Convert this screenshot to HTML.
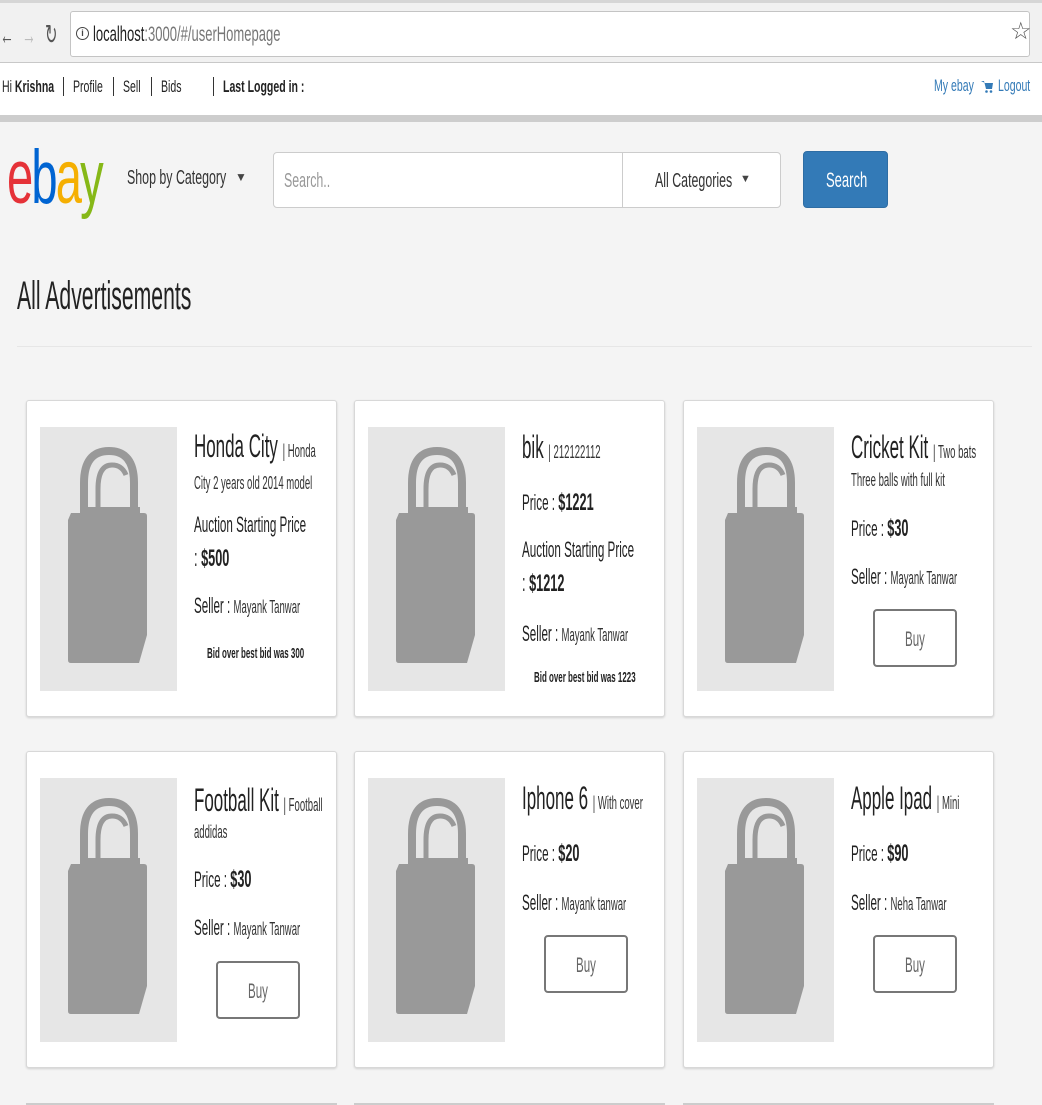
<!DOCTYPE html>
<html style="width:1042px;height:1105px;overflow:hidden"><head><meta charset="utf-8"><style>
*{margin:0;padding:0;box-sizing:border-box}
body{width:1042px;height:1105px;overflow:hidden;background:#f4f4f4;font-family:"Liberation Sans",Arial,sans-serif;color:#222;position:relative}
.s{position:absolute;white-space:nowrap;transform:scaleX(.53);transform-origin:0 0;line-height:1}
.n{transform:scaleX(.62)}
.abs{position:absolute}
.card{position:absolute;width:311px;height:317px;background:#fff;border:1px solid #d8d8d8;border-radius:3px;box-shadow:0 1px 2px rgba(0,0,0,.15)}
.img{position:absolute;left:13px;top:26px;width:137px;height:264px;background:#e6e6e6}
.buy{position:absolute;left:189px;width:84px;height:58px;border:2px solid #777;border-radius:4px;background:#fff}
.buy span{position:absolute;left:30px;top:18px;font-size:21px;color:#666;white-space:nowrap;transform:scaleX(.55);transform-origin:0 0;line-height:1}
b{font-weight:bold}
.sep{position:absolute;top:77px;width:1px;height:19px;background:#333}
</style></head><body>
<div class="abs" style="left:0;top:0;width:1042px;height:63px;background:#f1f1f1;border-bottom:1px solid #c8c8c8"></div>
<div class="abs" style="left:0;top:0;width:1042px;height:3px;background:#d6d6d6"></div>
<div class="s" style="left:0;top:22px;font-size:26px;color:#555">&#8592;</div>
<div class="s" style="left:22px;top:22px;font-size:26px;color:#bbb">&#8594;</div>
<div class="s" style="left:45px;top:21px;font-size:28px;color:#555">&#8635;</div>
<div class="abs" style="left:70px;top:11px;width:960px;height:46px;background:#fff;border:1px solid #c4c4c4;border-radius:3px"></div>
<div class="abs" style="left:76px;top:27px;width:13px;height:13px;border:1.5px solid #444;border-radius:50%;font-size:9px;line-height:10px;text-align:center;color:#444;font-weight:bold">i</div>
<div class="s n" style="left:93px;top:24px;font-size:21px;color:#222">localhost<span style="color:#777">:3000/#/userHomepage</span></div>
<div class="abs" style="left:1010px;top:20px;font-size:24px;color:#555;line-height:1">&#9734;</div>
<div class="abs" style="left:0;top:63px;width:1042px;height:52px;background:#fff"></div>
<div class="abs" style="left:0;top:115px;width:1042px;height:7px;background:#cdcdcd"></div>
<div class="s n" style="left:2px;top:78px;font-size:17px">Hi <b>Krishna</b></div>
<div class="sep" style="left:63px"></div>
<div class="s n" style="left:73px;top:78px;font-size:17px">Profile</div>
<div class="sep" style="left:113px"></div>
<div class="s n" style="left:123px;top:78px;font-size:17px">Sell</div>
<div class="sep" style="left:151px"></div>
<div class="s n" style="left:161px;top:78px;font-size:17px">Bids</div>
<div class="sep" style="left:213px"></div>
<div class="s n" style="left:223px;top:78px;font-size:17px;font-weight:bold">Last Logged in :</div>
<div class="s n" style="left:934px;top:77px;font-size:17px;color:#337ab7">My ebay</div>
<svg class="abs" style="left:981px;top:80px" width="12" height="13" viewBox="0 0 12 13"><path d="M0 1H3L5 9H11L12 3H4" fill="#337ab7"/><circle cx="5.5" cy="11.5" r="1.3" fill="#337ab7"/><circle cx="10" cy="11.5" r="1.3" fill="#337ab7"/></svg>
<div class="s n" style="left:998px;top:77px;font-size:17px;color:#337ab7">Logout</div>
<div class="s" style="left:7px;top:140px;font-size:76px;letter-spacing:-3px;transform:scaleX(.62)"><span style="color:#e53238">e</span><span style="color:#0064d2">b</span><span style="color:#f5af02">a</span><span style="color:#86b817">y</span></div>
<div class="s n" style="left:127px;top:168px;font-size:20px;color:#333">Shop by Category</div>
<div class="abs" style="left:235px;top:171px;font-size:12px;color:#444;line-height:1">&#9660;</div>
<div class="abs" style="left:273px;top:152px;width:508px;height:56px;background:#fff;border:1px solid #ccc;border-radius:4px"></div>
<div class="abs" style="left:622px;top:152px;width:1px;height:56px;background:#ccc"></div>
<div class="s n" style="left:284px;top:171px;font-size:20px;color:#999">Search..</div>
<div class="s n" style="left:655px;top:171px;font-size:20px;color:#333">All Categories</div>
<div class="abs" style="left:740px;top:174px;font-size:11px;color:#444;line-height:1">&#9660;</div>
<div class="abs" style="left:803px;top:151px;width:85px;height:57px;background:#337ab7;border:1px solid #2e6da4;border-radius:4px"></div>
<div class="s n" style="left:826px;top:170px;font-size:21px;color:#fff">Search</div>
<div class="s" style="left:17px;top:276px;font-size:40px;color:#222">All Advertisements</div>
<div class="abs" style="left:17px;top:346px;width:1015px;height:1px;background:#e6e6e6"></div>

<div class="card" style="left:26px;top:400px">
<div class="img"><svg width="137" height="264" viewBox="0 0 137 264"><path d="M44 86V56Q44 24 69 24Q94 24 94 56V86" fill="none" stroke="#999" stroke-width="8"/><path d="M58 82V62Q58 38 72 38Q82 38 86 48" fill="none" stroke="#999" stroke-width="5"/><path d="M44 80H100V86H44Z" fill="#999"/><path d="M31 86H104Q107 86 107 89V208L99 236H31Q28 236 28 233V93Z" fill="#999"/></svg></div>
<div class="s" style="left:167px;top:29px;font-size:32px">Honda City <span style="font-size:18px;color:#333">| Honda</span></div>
<div class="s" style="left:167px;top:73px;font-size:18px;color:#333">City 2 years old 2014 model</div>
<div class="s" style="left:167px;top:113px;font-size:22px">Auction Starting Price</div>
<div class="s" style="left:167px;top:146px;font-size:24px">: <b>$500</b></div>
<div class="s" style="left:167px;top:194px;font-size:22px">Seller : <span style="font-size:18px;color:#333">Mayank Tanwar</span></div>
<div class="s" style="left:180px;top:245px;font-size:15px;font-weight:bold">Bid over best bid was 300</div>
</div>

<div class="card" style="left:354px;top:400px">
<div class="img"><svg width="137" height="264" viewBox="0 0 137 264"><path d="M44 86V56Q44 24 69 24Q94 24 94 56V86" fill="none" stroke="#999" stroke-width="8"/><path d="M58 82V62Q58 38 72 38Q82 38 86 48" fill="none" stroke="#999" stroke-width="5"/><path d="M44 80H100V86H44Z" fill="#999"/><path d="M31 86H104Q107 86 107 89V208L99 236H31Q28 236 28 233V93Z" fill="#999"/></svg></div>
<div class="s" style="left:167px;top:30px;font-size:32px">bik <span style="font-size:18px;color:#333">| 212122112</span></div>
<div class="s" style="left:167px;top:90px;font-size:22px">Price : <b style="font-size:24px">$1221</b></div>
<div class="s" style="left:167px;top:138px;font-size:22px">Auction Starting Price</div>
<div class="s" style="left:167px;top:171px;font-size:24px">: <b>$1212</b></div>
<div class="s" style="left:167px;top:222px;font-size:22px">Seller : <span style="font-size:18px;color:#333">Mayank Tanwar</span></div>
<div class="s" style="left:179px;top:269px;font-size:15px;font-weight:bold">Bid over best bid was 1223</div>
</div>

<div class="card" style="left:683px;top:400px">
<div class="img"><svg width="137" height="264" viewBox="0 0 137 264"><path d="M44 86V56Q44 24 69 24Q94 24 94 56V86" fill="none" stroke="#999" stroke-width="8"/><path d="M58 82V62Q58 38 72 38Q82 38 86 48" fill="none" stroke="#999" stroke-width="5"/><path d="M44 80H100V86H44Z" fill="#999"/><path d="M31 86H104Q107 86 107 89V208L99 236H31Q28 236 28 233V93Z" fill="#999"/></svg></div>
<div class="s" style="left:167px;top:30px;font-size:32px">Cricket Kit <span style="font-size:18px;color:#333">| Two bats</span></div>
<div class="s" style="left:167px;top:70px;font-size:18px;color:#333">Three balls with full kit</div>
<div class="s" style="left:167px;top:116px;font-size:22px">Price : <b style="font-size:24px">$30</b></div>
<div class="s" style="left:167px;top:165px;font-size:22px">Seller : <span style="font-size:18px;color:#333">Mayank Tanwar</span></div>
<div class="buy" style="top:208px"><span>Buy</span></div>
</div>

<div class="card" style="left:26px;top:751px">
<div class="img"><svg width="137" height="264" viewBox="0 0 137 264"><path d="M44 86V56Q44 24 69 24Q94 24 94 56V86" fill="none" stroke="#999" stroke-width="8"/><path d="M58 82V62Q58 38 72 38Q82 38 86 48" fill="none" stroke="#999" stroke-width="5"/><path d="M44 80H100V86H44Z" fill="#999"/><path d="M31 86H104Q107 86 107 89V208L99 236H31Q28 236 28 233V93Z" fill="#999"/></svg></div>
<div class="s" style="left:167px;top:32px;font-size:32px">Football Kit <span style="font-size:18px;color:#333">| Football</span></div>
<div class="s" style="left:167px;top:71px;font-size:18px;color:#333">addidas</div>
<div class="s" style="left:167px;top:116px;font-size:22px">Price : <b style="font-size:24px">$30</b></div>
<div class="s" style="left:167px;top:165px;font-size:22px">Seller : <span style="font-size:18px;color:#333">Mayank Tanwar</span></div>
<div class="buy" style="top:209px"><span>Buy</span></div>
</div>

<div class="card" style="left:354px;top:751px">
<div class="img"><svg width="137" height="264" viewBox="0 0 137 264"><path d="M44 86V56Q44 24 69 24Q94 24 94 56V86" fill="none" stroke="#999" stroke-width="8"/><path d="M58 82V62Q58 38 72 38Q82 38 86 48" fill="none" stroke="#999" stroke-width="5"/><path d="M44 80H100V86H44Z" fill="#999"/><path d="M31 86H104Q107 86 107 89V208L99 236H31Q28 236 28 233V93Z" fill="#999"/></svg></div>
<div class="s" style="left:167px;top:30px;font-size:32px">Iphone 6 <span style="font-size:18px;color:#333">| With cover</span></div>
<div class="s" style="left:167px;top:90px;font-size:22px">Price : <b style="font-size:24px">$20</b></div>
<div class="s" style="left:167px;top:140px;font-size:22px">Seller : <span style="font-size:18px;color:#333">Mayank tanwar</span></div>
<div class="buy" style="top:183px"><span>Buy</span></div>
</div>

<div class="card" style="left:683px;top:751px">
<div class="img"><svg width="137" height="264" viewBox="0 0 137 264"><path d="M44 86V56Q44 24 69 24Q94 24 94 56V86" fill="none" stroke="#999" stroke-width="8"/><path d="M58 82V62Q58 38 72 38Q82 38 86 48" fill="none" stroke="#999" stroke-width="5"/><path d="M44 80H100V86H44Z" fill="#999"/><path d="M31 86H104Q107 86 107 89V208L99 236H31Q28 236 28 233V93Z" fill="#999"/></svg></div>
<div class="s" style="left:167px;top:30px;font-size:32px">Apple Ipad <span style="font-size:18px;color:#333">| Mini</span></div>
<div class="s" style="left:167px;top:90px;font-size:22px">Price : <b style="font-size:24px">$90</b></div>
<div class="s" style="left:167px;top:140px;font-size:22px">Seller : <span style="font-size:18px;color:#333">Neha Tanwar</span></div>
<div class="buy" style="top:183px"><span>Buy</span></div>
</div>

<div class="abs" style="left:26px;top:1103px;width:311px;height:2px;background:#ccc"></div>
<div class="abs" style="left:354px;top:1103px;width:311px;height:2px;background:#ccc"></div>
<div class="abs" style="left:683px;top:1103px;width:311px;height:2px;background:#ccc"></div>
</body></html>
